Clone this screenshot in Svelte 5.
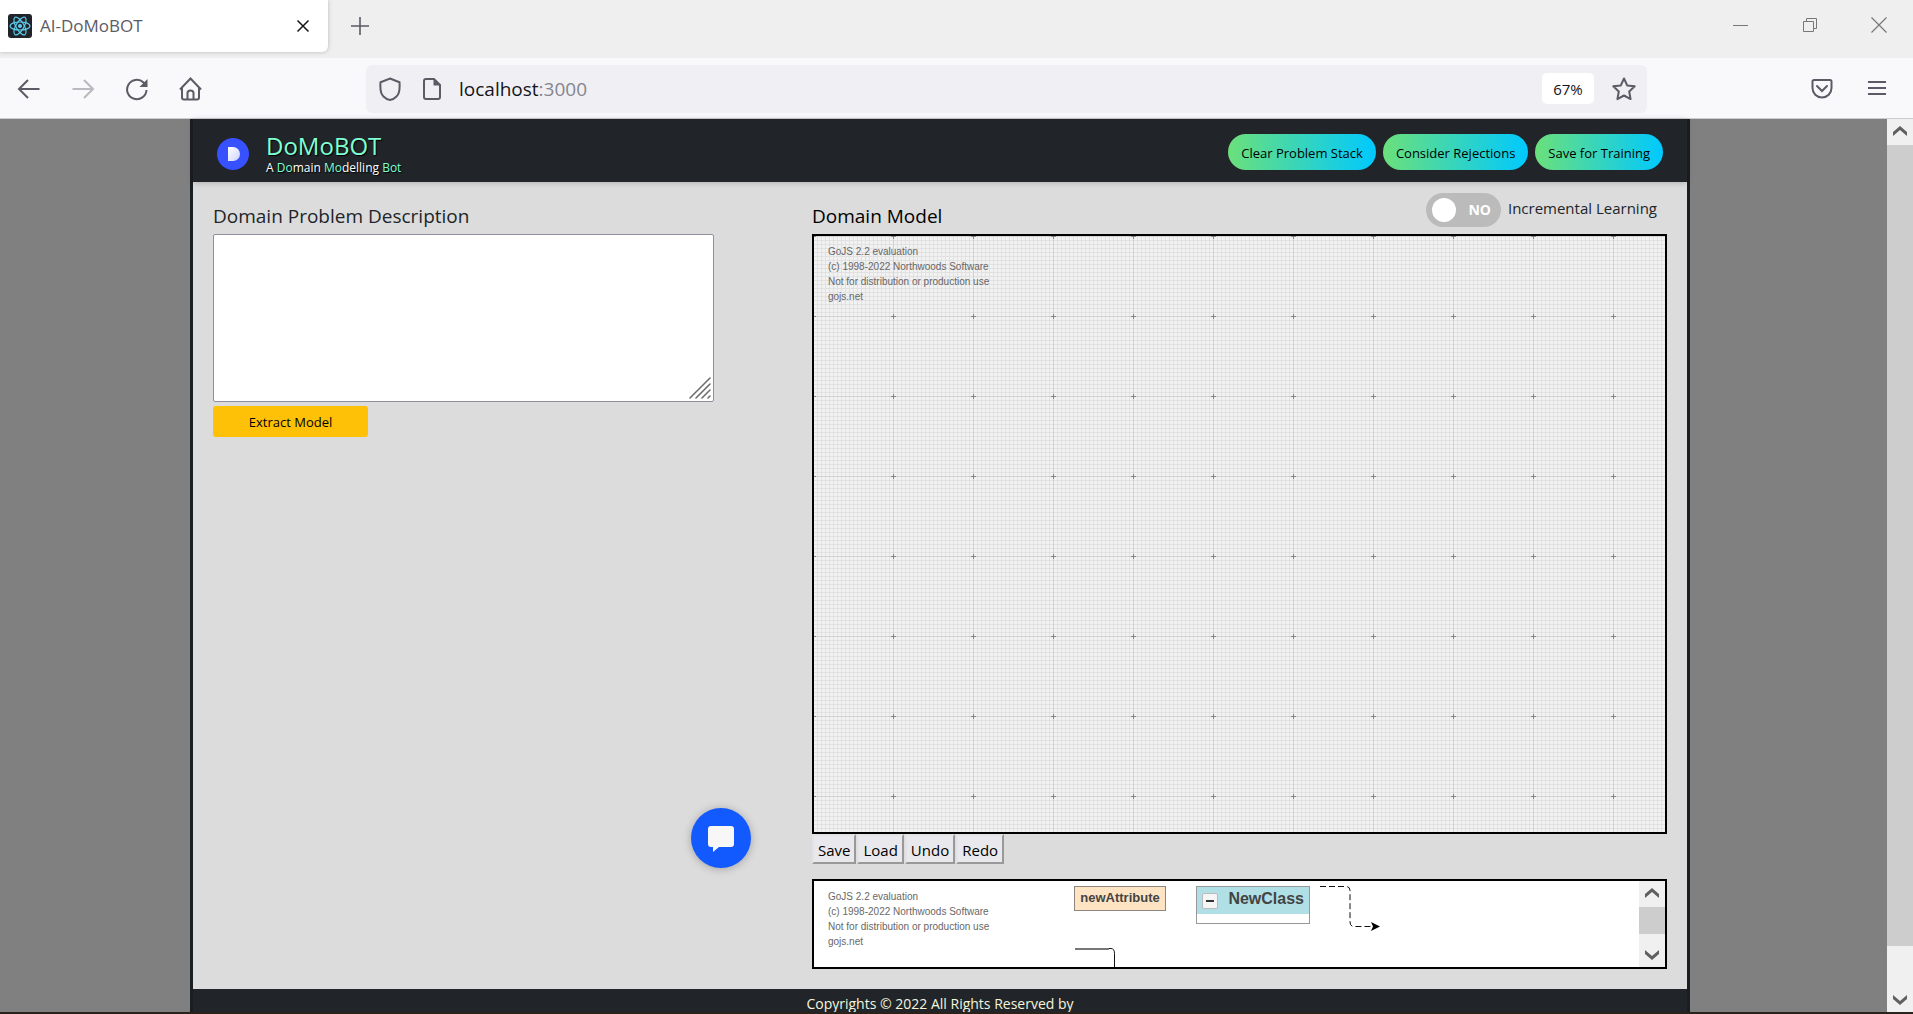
<script>
  let problem = $state('');
  let incremental = $state(false);
  const actions = ['Clear Problem Stack', 'Consider Rejections', 'Save for Training'];
  const tools = ['Save', 'Load', 'Undo', 'Redo'];
  const notice = [
    'GoJS 2.2 evaluation',
    '(c) 1998-2022 Northwoods Software',
    'Not for distribution or production use',
    'gojs.net'
  ];
</script>

{#snippet watermark()}
  <p class="watermark">
    {#each notice as line}<span>{line}</span>{/each}
  </p>
{/snippet}

{#snippet arrow(up)}
  <svg width="26" height="26" viewBox="0 0 26 26" aria-hidden="true">
    {#if up}
      <path d="M13 7l7 6v4l-7-6-7 6v-4z" fill="#606060" />
    {:else}
      <path d="M13 19l7-6V9l-7 6-7-6v4z" fill="#606060" />
    {/if}
  </svg>
{/snippet}

<div class="window">
  <header class="tabs">
    <div class="tab">
      <svg width="24" height="24" viewBox="0 0 24 24" aria-hidden="true">
        <rect width="24" height="24" rx="3" fill="#20232a" />
        <g fill="none" stroke="#5ccfee" stroke-width="1.2">
          <ellipse cx="12" cy="12" rx="10" ry="4" />
          <ellipse cx="12" cy="12" rx="10" ry="4" transform="rotate(60 12 12)" />
          <ellipse cx="12" cy="12" rx="10" ry="4" transform="rotate(120 12 12)" />
        </g>
        <circle cx="12" cy="12" r="2" fill="#5ccfee" />
      </svg>
      <span class="tab-title">AI-DoMoBOT</span>
      <button class="plain" aria-label="Close tab">
        <svg width="14" height="14" viewBox="0 0 14 14"><path d="M1.500 1.500l11 11M12.500 1.500l-11 11" stroke="#15141a" stroke-width="1.500" /></svg>
      </button>
    </div>
    <button class="plain new-tab" aria-label="New tab">
      <svg width="18" height="18" viewBox="0 0 18 18"><path d="M9 0v18M0 9h18" stroke="#5b5b66" stroke-width="1.600" /></svg>
    </button>
    <div class="controls">
      <button class="plain" aria-label="Minimize">
        <svg width="16" height="16" viewBox="0 0 16 16"><path d="M0 8.500h15" stroke="#777" /></svg>
      </button>
      <button class="plain" aria-label="Restore">
        <svg width="16" height="16" viewBox="0 0 16 16"><path d="M1.500 4.500h10v10h-10zM4.500 4.500v-3h10v10h-3" fill="none" stroke="#777" /></svg>
      </button>
      <button class="plain" aria-label="Close window">
        <svg width="16" height="16" viewBox="0 0 16 16"><path d="M.5.5l15 15M15.500.5l-15 15" stroke="#777" stroke-width="1.200" /></svg>
      </button>
    </div>
  </header>

  <nav class="toolbar">
    <div class="nav-buttons">
      <button class="plain" aria-label="Back">
        <svg width="24" height="24" viewBox="0 0 24 24"><path d="M22.500 12H2M11 3L2 12l9 9" class="ink" /></svg>
      </button>
      <button class="plain faded" aria-label="Forward">
        <svg width="24" height="24" viewBox="0 0 24 24"><path d="M1.500 12H22M13 3l9 9-9 9" class="ink" /></svg>
      </button>
      <button class="plain" aria-label="Reload">
        <svg width="24" height="24" viewBox="0 0 24 24"><path d="M21.500 13A9.700 9.700 0 1 1 18.500 5.500l2 2.500" class="ink" /><path d="M22.500 2v8h-8z" fill="#5b5b66" /></svg>
      </button>
      <button class="plain" aria-label="Home">
        <svg width="24" height="24" viewBox="0 0 24 24"><path d="M1 12.500L11.500 1.500 22 12.500M3 11v9.500q0 2 2 2h13q2 0 2-2V11M8.500 22v-6q0-2.500 3-2.500t3 2.500v6" class="ink" /></svg>
      </button>
    </div>
    <div class="address">
      <svg width="24" height="24" viewBox="0 0 24 24" aria-hidden="true"><path d="M12 1.500l9.500 3.800q.8 11-3 14.200Q15.500 22.500 12 23q-3.500-.5-6.500-3.500-3.800-3.200-3-14.200z" class="ink" /></svg>
      <svg class="page-icon" width="20" height="24" viewBox="0 0 20 24" aria-hidden="true"><path d="M4 2h8l6 6v12q0 2-2 2H4q-2 0-2-2V4q0-2 2-2z" class="ink" /><path d="M11.500 1.500v7h7z" fill="#5b5b66" /></svg>
      <div class="url"><input aria-label="Address" value="localhost" /><span>:3000</span></div>
      <button class="zoom">67%</button>
      <button class="plain" aria-label="Bookmark">
        <svg width="24" height="24" viewBox="0 0 24 24"><path d="M12 1.500l3.200 6.900 7.500.9-5.500 5.200 1.400 7.600L12 18.500l-6.600 3.600 1.400-7.600L1.300 9.300l7.500-.9z" class="ink" stroke-linejoin="round" /></svg>
      </button>
    </div>
    <div class="tools-right">
      <button class="plain" aria-label="Save to Pocket">
        <svg width="22" height="22" viewBox="0 0 22 22"><path d="M3 2h16q1.500 0 1.500 1.500V10A9.500 9.500 0 0 1 1.500 10V3.500Q1.500 2 3 2z" class="ink" /><path d="M6 8l5 5 5-5" class="ink" stroke-linecap="round" /></svg>
      </button>
      <button class="plain" aria-label="Menu">
        <svg width="20" height="22" viewBox="0 0 20 22"><path d="M1 4h18M1 10h18M1 16h18" class="ink" /></svg>
      </button>
    </div>
  </nav>

  <div class="viewport">
    <div class="backdrop">
      <div class="app">
        <header class="app-header">
          <svg width="32" height="32" viewBox="0 0 32 32" aria-hidden="true">
            <defs><linearGradient id="dfill" x2="1" y2="1"><stop stop-color="#fff" /><stop offset="1" stop-color="#ccd3ff" /></linearGradient></defs>
            <circle cx="16" cy="16" r="16" fill="#3751ff" />
            <path d="M11 9h5a7 7 0 0 1 0 14h-5z" fill="url(#dfill)" />
          </svg>
          <div class="brand">
            <h1>DoMoBOT</h1>
            <p>A <b>Do</b>main <b>Mo</b>delling <b>Bot</b></p>
          </div>
          <div class="actions">
            {#each actions as action}<button>{action}</button>{/each}
          </div>
        </header>

        <main>
          <section class="left">
            <label class="heading soft" for="problem">Domain Problem Description</label>
            <div class="field">
              <textarea id="problem" bind:value={problem}></textarea>
              <svg class="grip" width="22" height="22" viewBox="0 0 22 22" aria-hidden="true"><path d="M1 21L21 1M7 21L21 7M13 21l8-8M19 21l2-2" stroke="#6e6e6e" stroke-width="1.600" stroke-linecap="round" /></svg>
            </div>
            <button class="extract">Extract Model</button>
          </section>

          <section class="right">
            <div class="model-head">
              <h2 class="heading">Domain Model</h2>
              <label class="learning">
                <span class="switch" class:on={incremental}>
                  <input type="checkbox" bind:checked={incremental} />
                  <i></i><em>{incremental ? 'YES' : 'NO'}</em>
                </span>
                <span>Incremental Learning</span>
              </label>
            </div>
            <div class="diagram">
              <svg class="grid" aria-hidden="true">
                <defs>
                  <pattern id="minor" x="-1" width="4" height="4" patternUnits="userSpaceOnUse">
                    <path d="M0 .5h4M.5 0v4" stroke="#e1e1e1" />
                  </pattern>
                  <pattern id="major" x="-41" y="-40" width="80" height="80" patternUnits="userSpaceOnUse">
                    <path d="M0 40.500h80M40.500 0v80" stroke="#d2d2d2" />
                    <path d="M38 40.500h5M40.500 38v5" stroke="#858585" />
                  </pattern>
                </defs>
                <rect width="100%" height="100%" fill="url(#minor)" />
                <rect width="100%" height="100%" fill="url(#major)" />
              </svg>
              {@render watermark()}
            </div>
            <div class="edit-tools">
              {#each tools as tool}<button>{tool}</button>{/each}
            </div>
            <div class="palette">
              {@render watermark()}
              <div class="canvas">
                <div class="attribute">newAttribute</div>
                <div class="class-node">
                  <div class="class-title">
                    <button aria-label="Collapse"><svg width="8" height="2"><path d="M0 1h8" stroke="#333" stroke-width="2" /></svg></button>
                    <span>NewClass</span>
                  </div>
                </div>
                <svg class="links" width="310" height="86" viewBox="0 0 310 86" aria-hidden="true">
                  <path d="M247 5.500h26q4 0 4 4V41q0 4.500 4 4.500h20" fill="none" stroke="#111" stroke-dasharray="6 3" />
                  <path d="M298 41l9 4.500-9 4.500 2-4.500z" fill="#000" />
                  <path d="M2 68h34" stroke="#777" stroke-width="2" />
                  <path d="M36 67.500h2q3.500 0 3.500 5V86" fill="none" stroke="#111" />
                </svg>
              </div>
              <div class="scroll">
                {@render arrow(true)}
                <div class="mini-thumb"></div>
                {@render arrow(false)}
              </div>
            </div>
          </section>
        </main>
        <footer>Copyrights © 2022 All Rights Reserved by</footer>
      </div>
    </div>
    <div class="scroll page-scroll">
      {@render arrow(true)}
      <div class="thumb"></div>
      {@render arrow(false)}
    </div>
    <button class="chat" aria-label="Open chat">
      <svg width="28" height="28" viewBox="0 0 28 28"><path d="M4 1h20q3 0 3 3v15q0 3-3 3H12l-6 5v-5H4q-3 0-3-3V4q0-3 3-3z" fill="#f7f7f7" /></svg>
    </button>
  </div>
</div>

<style>
  :global(body) { background: #808080; }
  * { box-sizing: border-box; }
  h1, h2, p { margin: 0; font-weight: 400; }
  button, input, textarea { font-family: inherit; }
  svg { display: block; flex: none; }
  .window {
    min-height: 100vh;
    display: flex;
    flex-direction: column;
    border-bottom: 2px solid #2b211b;
    font-family: "Open Sans", "Noto Sans", sans-serif;
    color: #212529;
  }
  .plain { border: 0; padding: 0; background: none; display: block; }
  .ink { fill: none; stroke: #5b5b66; stroke-width: 2; }
  .faded { opacity: .4; }

  .tabs { height: 58px; background: #efefef; display: flex; align-items: flex-start; }
  .tab {
    width: 328px;
    height: 52px;
    padding: 0 18px 1px 8px;
    display: flex;
    align-items: center;
    gap: 8px;
    background: #fff;
    border-radius: 0 0 6px 0;
    box-shadow: 0 0 4px #8888;
  }
  .tab-title { flex: 1; font-size: 17px; color: #5b5b66; }
  .new-tab { margin: 17px 0 0 23px; }
  .controls { margin: 17px 26px 0 auto; display: flex; gap: 53px; }

  .toolbar {
    height: 61px;
    padding-top: 1px;
    background: #f9f9fb;
    border-bottom: 1px solid #ccc;
    display: flex;
    align-items: center;
  }
  .nav-buttons { width: 366px; padding-left: 17px; display: flex; gap: 30px; }
  .address {
    flex: 1;
    height: 48px;
    padding: 0 11px 0 12px;
    display: flex;
    align-items: center;
    background: #f0f0f4;
    border-radius: 6px;
  }
  .page-icon { margin: 0 17px 0 20px; }
  .url { flex: 1; display: flex; align-items: center; font-size: 19px; line-height: 26px; color: #85858e; }
  .url input {
    field-sizing: content;
    border: 0;
    padding: 0;
    background: none;
    font-size: 19px;
    color: #15141a;
  }
  .zoom {
    width: 52px;
    height: 31px;
    margin-right: 18px;
    padding: 0;
    border: 0;
    border-radius: 5px;
    background: #fff;
    font-size: 15px;
    color: #15141a;
  }
  .tools-right { width: 266px; padding-right: 26px; display: flex; justify-content: flex-end; gap: 34px; }

  .viewport { flex: 1; display: flex; position: relative; }
  .backdrop { flex: 1; padding: 0 197px 0 190px; background: #808080; display: flex; }
  .app {
    flex: 1;
    display: flex;
    flex-direction: column;
    border: solid #191e22;
    border-width: 0 3px;
    background: #dcdcdc;
  }
  .app-header {
    height: 63px;
    padding: 0 24px;
    display: flex;
    align-items: center;
    background: #212529;
    box-shadow: 0 1px 6px #0003;
  }
  .app-header > svg { margin-top: 6px; }
  .brand { margin: 3px 0 0 17px; text-shadow: 1px 1px 1px #000; }
  .brand h1 { font-size: 24px; line-height: 32px; color: #7fffd4; }
  .brand p { font-size: 12px; line-height: 12px; color: #fff; }
  .brand b { font-weight: 400; color: #7fffd4; }
  .actions { margin: 3px 0 0 auto; display: flex; gap: 7px; }
  .actions button {
    height: 36px;
    padding: 2px 13px 0;
    border: 0;
    border-radius: 18px;
    background: linear-gradient(to right, #6be07b, #00c9ff);
    font-size: 13px;
    color: #000;
  }

  main {
    flex: 1;
    padding: 0 20px;
    display: grid;
    grid-template-columns: 501fr 855fr;
    gap: 98px;
  }
  .heading { display: block; font-size: 19px; line-height: 24px; color: #000; }
  .soft { color: #212529; }
  .left { padding-top: 22px; }
  .field { position: relative; margin: 6px 0 4px; }
  textarea {
    display: block;
    width: 100%;
    height: 168px;
    border: 1px solid #8f8f9d;
    border-radius: 2px;
    background: #fff;
    resize: none;
  }
  .grip { position: absolute; right: 3px; bottom: 3px; }
  .extract {
    width: 155px;
    height: 31px;
    padding: 1px 0 0;
    border: 0;
    border-radius: 3px;
    background: #ffc107;
    font-size: 13px;
    color: #000;
  }

  .model-head { height: 52px; display: flex; justify-content: space-between; align-items: flex-start; }
  .model-head .heading { margin-top: 22px; }
  .learning {
    margin: 11px 10px 0 0;
    display: flex;
    gap: 7px;
    font-size: 15px;
    line-height: 30px;
  }
  .switch {
    position: relative;
    width: 75px;
    height: 34px;
    padding: 0 10px 0 6px;
    display: flex;
    align-items: center;
    justify-content: space-between;
    border-radius: 17px;
    background: #bbb;
  }
  .switch.on { background: #2ab934; flex-direction: row-reverse; }
  .switch input { position: absolute; inset: 0; width: 100%; height: 100%; margin: 0; opacity: 0; }
  .switch i { width: 24px; height: 24px; border-radius: 50%; background: #fff; }
  .switch em { font-size: 14px; font-style: normal; font-weight: 700; color: #fff; }

  .diagram { position: relative; height: 600px; border: 2px solid #000; background: #f2f2f2; }
  .grid { position: absolute; inset: 0; width: 100%; height: 100%; }
  .watermark {
    position: relative;
    padding: 8px 0 0 14px;
    font: 10px/15px "Liberation Sans", Arial, sans-serif;
    color: #686868;
  }
  .watermark span { display: block; }
  .edit-tools { display: flex; gap: 1px; margin-bottom: 15px; }
  .edit-tools button {
    height: 30px;
    padding: 1px 4px 0;
    border: 2px solid;
    border-color: #e3e3e6 #999 #999 #e3e3e6;
    background: #e9e9ed;
    font-size: 15px;
    color: #000;
  }
  .palette { height: 90px; border: 2px solid #000; background: #fff; display: flex; overflow: hidden; }
  .palette .watermark { width: 259px; flex: none; }
  .canvas { flex: 1; position: relative; }
  .attribute, .class-node, .links { position: absolute; }
  .attribute {
    left: 1px;
    top: 5px;
    width: 92px;
    height: 25px;
    border: 1px solid #8c8680;
    background: #ffe4c4;
    font: bold 13px/22px "Liberation Sans", Arial, sans-serif;
    text-align: center;
    color: #444;
  }
  .class-node { left: 123px; top: 5px; width: 114px; height: 38px; border: 1px solid #999; background: #fff; }
  .class-title {
    height: 27px;
    padding: 0 5px;
    display: flex;
    align-items: center;
    justify-content: space-between;
    background: #b0e0e6;
    font: bold 16px/24px "Liberation Sans", Arial, sans-serif;
    color: #444;
  }
  .class-title span { padding-bottom: 3px; }
  .class-title button {
    width: 16px;
    height: 16px;
    padding: 0 3px;
    border: 1px solid #bbb;
    border-radius: 2px;
    background: #f5f5f5;
  }
  .links { left: 0; top: 0; }
  .scroll { width: 26px; flex: none; display: flex; flex-direction: column; background: #f0f0f0; justify-content: space-between; }
  .mini-thumb { height: 27px; margin-bottom: 7px; background: #cdcdcd; }
  .thumb { flex: 1; margin-bottom: 40px; background: #cdcdcd; }
  footer {
    height: 23px;
    padding-top: 4px;
    background: #212529;
    font-size: 14px;
    line-height: 22px;
    text-align: center;
    color: #f5f5dc;
    overflow: hidden;
  }
  .chat {
    position: absolute;
    left: 691px;
    bottom: 144px;
    width: 60px;
    height: 60px;
    padding: 2px 0 0 16px;
    border: 0;
    border-radius: 50%;
    background: #135afe;
    box-shadow: 0 1px 8px #0004;
  }
</style>
